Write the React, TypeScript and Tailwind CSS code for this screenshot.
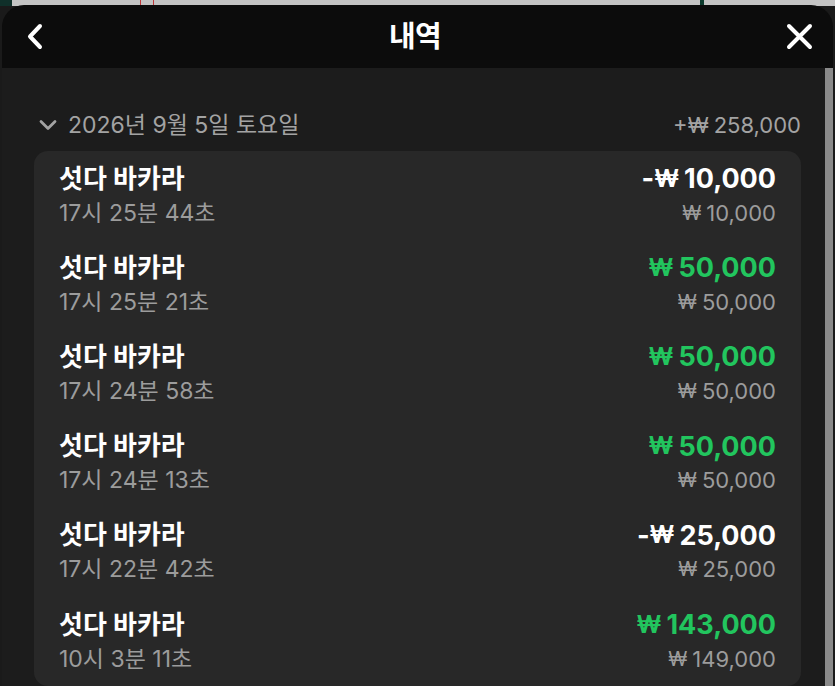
const rows = [
	{ time: "17시 25분 44초", sign: "-", amount: "10,000", bet: "10,000", win: false },
	{ time: "17시 25분 21초", sign: "", amount: "50,000", bet: "50,000", win: true },
	{ time: "17시 24분 58초", sign: "", amount: "50,000", bet: "50,000", win: true },
	{ time: "17시 24분 13초", sign: "", amount: "50,000", bet: "50,000", win: true },
	{ time: "17시 22분 42초", sign: "-", amount: "25,000", bet: "25,000", win: false },
	{ time: "10시 3분 11초", sign: "", amount: "143,000", bet: "149,000", win: true },
];

const App = () => {
	return (
		<div
			className="w-[835px] h-[686px] overflow-hidden bg-[#1a1a1a] flex flex-col"
			style={{ fontFamily: '"Inter", "Noto Sans CJK KR", sans-serif' }}
		>
			{/* page behind the sheet */}
			<div className="h-[6px] shrink-0 bg-[#c4c4c4] flex">
				<div className="w-[12px] bg-[#10302a]" />
				<div className="ml-[128px] w-[14px] border-x border-[#c0383a]" />
				<div className="ml-[546px] w-[4px] bg-[#0d3b2e]" />
			</div>

			<div className="flex-1 mx-[2px] rounded-t-[22px] overflow-hidden flex flex-col -mt-px">
				{/* header */}
				<div className="h-[63px] shrink-0 bg-[#0c0c0c] flex items-center justify-between pl-[24px] pr-[20px]">
					<svg width="18" height="27" viewBox="0 0 18 27" fill="none">
						<polyline
							points="14,3 4,13.5 14,24"
							stroke="white"
							strokeWidth="4"
							strokeLinecap="round"
							strokeLinejoin="round"
						/>
					</svg>
					<h1 className="text-white text-[29px] font-bold tracking-tight leading-none">내역</h1>
					<svg width="27" height="27" viewBox="0 0 27 27" fill="none">
						<path d="M3 3 L24 24 M24 3 L3 24" stroke="white" strokeWidth="4" strokeLinecap="round" />
					</svg>
				</div>

				<div className="flex-1 flex min-h-0">
					<div className="flex-1 bg-[#1c1c1c] pl-[32px] pr-[24px] pt-[40px]">
						{/* date */}
						<div className="flex items-center justify-between h-[34px] mb-[9px]">
							<div className="flex items-center text-[#a3a3a3] text-[23px]">
								<svg width="20" height="12" viewBox="0 0 20 12" fill="none" className="ml-[4px] mr-[10px]">
									<polyline
										points="3,2.5 10,9.5 17,2.5"
										stroke="#a3a3a3"
										strokeWidth="2.8"
										strokeLinecap="round"
										strokeLinejoin="round"
									/>
								</svg>
								<span>2026년 9월 5일 토요일</span>
							</div>
							<span className="text-[#a3a3a3] text-[22px]">
								+<span className="mr-[5px]">₩</span>258,000
							</span>
						</div>

						{/* list */}
						<div className="bg-[#282828] rounded-[14px] px-[25px]">
							{rows.map((r, i) => (
								<div key={i} className="flex justify-between py-[10.6px]">
									<div className="flex flex-col">
										<span className="text-white text-[26px] font-bold leading-[34px]">섯다 바카라</span>
										<span className="text-[#9c9c9c] text-[23px] leading-[34px]">{r.time}</span>
									</div>
									<div className="flex flex-col items-end">
										<div
											className={`h-[34px] flex items-center text-[27px] font-bold leading-none ${r.win ? "text-[#22c55e]" : "text-white"}`}
										>
											{r.sign}
											<span className="mr-[5px] text-[24px]">₩</span>
											{r.amount}
										</div>
										<div className="h-[34px] flex items-center text-[#9c9c9c] text-[22px] leading-none">
											<span className="mr-[5px] text-[20px]">₩</span>
											{r.bet}
										</div>
									</div>
								</div>
							))}
						</div>
					</div>
					<div className="w-[8px] bg-[#8a8a8a]" />
				</div>
			</div>
		</div>
	);
};

export default App;
